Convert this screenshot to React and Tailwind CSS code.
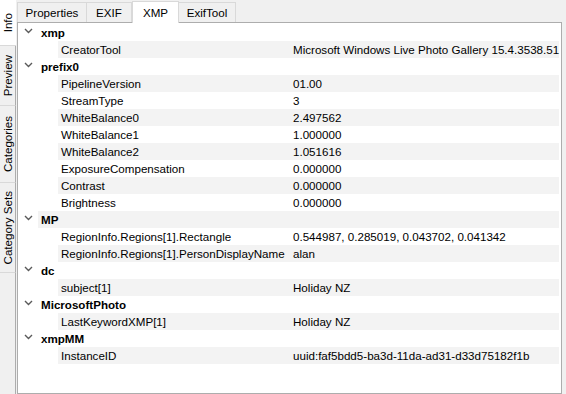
import React from "react";

const rows = [
  { group: "xmp" },
  { name: "CreatorTool", value: "Microsoft Windows Live Photo Gallery 15.4.3538.51" },
  { group: "prefix0" },
  { name: "PipelineVersion", value: "01.00" },
  { name: "StreamType", value: "3" },
  { name: "WhiteBalance0", value: "2.497562" },
  { name: "WhiteBalance1", value: "1.000000" },
  { name: "WhiteBalance2", value: "1.051616" },
  { name: "ExposureCompensation", value: "0.000000" },
  { name: "Contrast", value: "0.000000" },
  { name: "Brightness", value: "0.000000" },
  { group: "MP" },
  { name: "RegionInfo.Regions[1].Rectangle", value: "0.544987, 0.285019, 0.043702, 0.041342" },
  { name: "RegionInfo.Regions[1].PersonDisplayName", value: "alan" },
  { group: "dc" },
  { name: "subject[1]", value: "Holiday NZ" },
  { group: "MicrosoftPhoto" },
  { name: "LastKeywordXMP[1]", value: "Holiday NZ" },
  { group: "xmpMM" },
  { name: "InstanceID", value: "uuid:faf5bdd5-ba3d-11da-ad31-d33d75182f1b" },
];

const sideTabs = [
  { label: "Info", h: "h-[46px]", active: true },
  { label: "Preview", h: "h-[60px]" },
  { label: "Categories", h: "h-[77px]" },
  { label: "Category Sets", h: "h-[90px]" },
];

const topTabs = [
  { label: "Properties", w: "w-[70px]" },
  { label: "EXIF", w: "w-[46px]" },
  { label: "XMP", w: "w-[47px]", active: true },
  { label: "ExifTool", w: "w-[58px]" },
];

function Chevron() {
  return (
    <svg width="9" height="6" viewBox="0 0 9 6" className="mt-[-3px]">
      <path d="M1 1 L4.5 4.5 L8 1" fill="none" stroke="#5a5a5a" strokeWidth="1.4" />
    </svg>
  );
}

export default function App() {
  return (
    <div
      className="w-[566px] h-[394px] bg-[#f0f0f0] flex overflow-hidden text-[11.6px] text-black"
      style={{ fontFamily: '"Liberation Sans", Arial, sans-serif' }}
    >
      {/* Side tabs */}
      <div className="w-[16px] shrink-0 flex flex-col">
        {sideTabs.map((t) => (
          <div
            key={t.label}
            className={`${t.h} flex items-center justify-center border-b border-[#d9d9d9] ${
              t.active ? "bg-white" : "bg-[#f0f0f0] border-r border-r-[#adadad]"
            }`}
          >
            <span className="[writing-mode:vertical-rl] rotate-180 whitespace-nowrap leading-none">{t.label}</span>
          </div>
        ))}
        <div className="flex-1 border-r border-[#adadad]" />
      </div>

      {/* Main */}
      <div className="flex-1 min-w-0 flex flex-col ml-[1px] mr-[4px]">
        <div className="h-[22px] shrink-0 flex items-end">
          {topTabs.map((t) => (
            <div
              key={t.label}
              className={`${t.w} shrink-0 flex items-center justify-center border-t border-x border-[#d9d9d9] ${
                t.active ? "h-[22px] bg-white border-[#adadad] -mb-[1px] relative z-10" : "h-[20px] bg-[#f0f0f0] -ml-[1px] first:ml-0"
              }`}
            >
              {t.label}
            </div>
          ))}
        </div>
        <div className="flex-1 min-w-0 bg-white border border-[#adadad] pt-[1px] pr-[2px] overflow-hidden">
          {rows.map((r, i) => {
            const bg = i % 2 === 1 ? "bg-[#f3f3f3]" : "bg-white";
            if (r.group) {
              return (
                <div key={i} className="h-[17px] flex items-center">
                  <div className="w-[20px] shrink-0 flex justify-center">
                    <Chevron />
                  </div>
                  <div className={`flex-1 h-full flex items-center pl-[3px] font-bold ${bg}`}>{r.group}</div>
                </div>
              );
            }
            return (
              <div key={i} className="h-[17px] flex items-center">
                <div className="w-[40px] shrink-0" />
                <div className={`flex-1 min-w-0 h-full flex items-center ${bg}`}>
                  <div className="w-[232px] shrink-0 pl-[3px] whitespace-nowrap overflow-hidden">{r.name}</div>
                  <div className="pl-[3px] whitespace-nowrap">{r.value}</div>
                </div>
              </div>
            );
          })}
        </div>
      </div>
    </div>
  );
}
